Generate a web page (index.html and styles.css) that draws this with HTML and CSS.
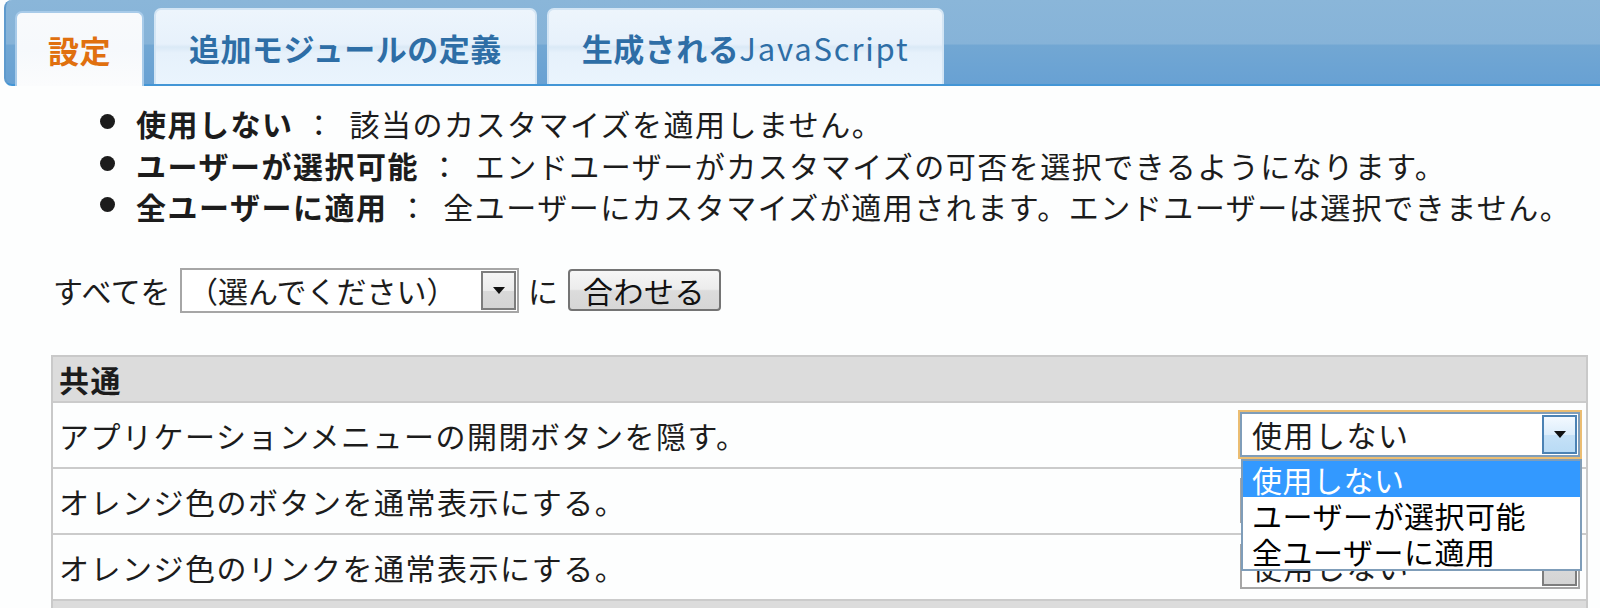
FILE: index.html
```html
<!DOCTYPE html>
<html lang="ja">
<head>
<meta charset="utf-8">
<title>設定</title>
<link rel="stylesheet" href="styles.css">
</head>
<body>
<div class="tabbar">
  <div class="tab active">設定</div>
  <div class="tab">追加モジュールの定義</div>
  <div class="tab">生成される<span class="latin">JavaScript</span></div>
</div>
<div class="content">
  <ul class="legend">
    <li><b>使用しない</b> <span class="sep">：</span> 該当のカスタマイズを適用しません。</li>
    <li><b>ユーザーが選択可能</b> <span class="sep">：</span> エンドユーザーがカスタマイズの可否を選択できるようになります。</li>
    <li><b>全ユーザーに適用</b> <span class="sep">：</span> 全ユーザーにカスタマイズが適用されます。エンドユーザーは選択できません。</li>
  </ul>
  <div class="bulk">
    <span class="bulk-label">すべてを</span>
    <div class="combo bulk-combo">
      <span class="combo-text">（選んでください）</span>
      <span class="combo-btn"><svg width="12" height="7" viewBox="0 0 12 7"><path d="M0 0H12L6 7Z" fill="#111"/></svg></span>
    </div>
    <span class="bulk-ni">に</span>
    <button class="btn" type="button">合わせる</button>
  </div>
  <table class="settings">
    <tr><th colspan="2">共通</th></tr>
    <tr>
      <td class="label">アプリケーションメニューの開閉ボタンを隠す。</td>
      <td class="choice">
        <div class="combo focus">
          <span class="combo-text">使用しない</span>
          <span class="combo-btn"><svg width="12" height="7" viewBox="0 0 12 7"><path d="M0 0H12L6 7Z" fill="#111"/></svg></span>
          <ul class="dropdown">
            <li class="selected">使用しない</li>
            <li>ユーザーが選択可能</li>
            <li>全ユーザーに適用</li>
          </ul>
        </div>
      </td>
    </tr>
    <tr>
      <td class="label">オレンジ色のボタンを通常表示にする。</td>
      <td class="choice">
        <div class="combo">
          <span class="combo-text">使用しない</span>
          <span class="combo-btn"><svg width="12" height="7" viewBox="0 0 12 7"><path d="M0 0H12L6 7Z" fill="#111"/></svg></span>
        </div>
      </td>
    </tr>
    <tr>
      <td class="label">オレンジ色のリンクを通常表示にする。</td>
      <td class="choice">
        <div class="combo">
          <span class="combo-text">使用しない</span>
          <span class="combo-btn"><svg width="12" height="7" viewBox="0 0 12 7"><path d="M0 0H12L6 7Z" fill="#111"/></svg></span>
        </div>
      </td>
    </tr>
    <tr><th colspan="2">ユーザー</th></tr>
  </table>
</div>
</body>
</html>
```

FILE: styles.css
```css
html, body {
  margin: 0;
  padding: 0;
  background: #fdfefe;
}

body {
  font-family: "Noto Sans CJK JP", "Noto Sans", sans-serif;
  font-size: 30px;
  letter-spacing: 1.5px;
  color: #1c1c1c;
  overflow: hidden;
}

/* ---------- tab bar ---------- */
.tabbar {
  margin-left: 4px;
  height: 84px;
  box-sizing: content-box;
  display: flex;
  align-items: flex-end;
  gap: 10px;
  padding-left: 9px;
  border-left: 2px solid #5e9acd;
  border-bottom: 2px solid #4396d6;
  border-radius: 8px 0 0 8px;
  background: linear-gradient(to bottom, #8ab6d9 0%, #86b3d8 52%, #72a7d3 54%, #68a1d3 100%);
}

.tab {
  box-sizing: border-box;
  height: 76px;
  padding: 0 33px;
  display: flex;
  align-items: center;
  font-size: 31px;
  font-weight: 700;
  letter-spacing: 0.5px;
  color: #2e6ea6;
  white-space: nowrap;
  border: 2px solid #d3e5f4;
  border-bottom: none;
  border-radius: 7px 7px 0 0;
  background: linear-gradient(to bottom, #edf5fc 0%, #e7f1fb 46%, #dae9f6 50%, #e6f1fb 58%, #eaf4fd 100%);
}

.tab.active {
  height: 75px;
  margin-bottom: -2px;
  padding: 0 31px;
  color: #e0700f;
  border-color: #a8cbe9;
  background: linear-gradient(to bottom, #f8fafc 0%, #f6f9fc 50%, #fbfcfd 100%);
}

.latin {
  font-weight: 400;
  letter-spacing: 1.8px;
}

/* ---------- content ---------- */
.content {
  padding: 0 12px 0 51px;
}

.legend {
  margin: 15px 0 0;
  padding-left: 85px;
  list-style: disc;
}

.legend li {
  line-height: 37.5px;
  white-space: nowrap;
}

.legend li::marker {
  font-size: 38px;
}

.legend b {
  font-weight: 700;
}

.legend .sep {
  margin: 0 6px 0 2px;
}

.bulk {
  display: flex;
  align-items: center;
  margin-top: 42px;
  height: 45px;
}

.bulk-label {
  margin-left: 2px;
  letter-spacing: 0.5px;
}

.bulk-ni {
  margin: 0 8px 0 9px;
}

/* ---------- combo boxes ---------- */
.combo {
  position: relative;
  box-sizing: border-box;
  width: 340px;
  height: 45px;
  display: flex;
  align-items: center;
  border: 2px solid #a6a6a6;
  background: #fff;
}

.bulk-combo {
  width: 339px;
  margin-left: 9px;
}

.combo-text {
  flex: 1;
  padding-left: 10px;
  line-height: 41px;
  white-space: nowrap;
}

.bulk-combo .combo-text {
  padding-left: 6px;
  letter-spacing: 0;
}

.combo-btn {
  box-sizing: border-box;
  width: 35px;
  height: 39px;
  margin-right: 1px;
  display: flex;
  align-items: center;
  justify-content: center;
  border: 2px solid #7d7d7d;
  background: linear-gradient(to bottom, #f5f5f5 0%, #ebebeb 50%, #d9d9d9 52%, #d4d4d4 100%);
}

.combo.focus {
  border-color: #7f9db9;
  outline: 2px solid #ebbd72;
}

.combo.focus .combo-btn {
  border-color: #4b82b4;
  background: linear-gradient(to bottom, #f3f9ff 0%, #dcedfb 50%, #c5e1f7 52%, #b9dbf5 100%);
}

.dropdown {
  position: absolute;
  top: 43px;
  left: -1px;
  width: 341px;
  box-sizing: border-box;
  margin: 2px 0 0;
  padding: 0;
  list-style: none;
  background: #fff;
  border: 2px solid #7f9db9;
  z-index: 5;
}

.dropdown li {
  height: 36px;
  line-height: 36px;
  padding-left: 9px;
  white-space: nowrap;
  letter-spacing: 0.5px;
  color: #000;
}

.dropdown li.selected {
  background: #3399ff;
  color: #fff;
}

/* ---------- button ---------- */
.btn {
  box-sizing: border-box;
  width: 153px;
  height: 42px;
  padding: 0;
  font-family: inherit;
  font-size: 30px;
  letter-spacing: 0.5px;
  line-height: 36px;
  color: #111;
  border: 2px solid #747474;
  border-radius: 4px;
  background: linear-gradient(to bottom, #f6f6f6 0%, #ececec 48%, #dcdcdc 52%, #d6d6d6 100%);
}

/* ---------- settings table ---------- */
.settings {
  width: 100%;
  margin-top: 42px;
  border-collapse: separate;
  border-spacing: 0;
  border: 2px solid #c9c9c9;
  border-bottom: none;
}

.settings th,
.settings td {
  box-sizing: border-box;
  border-bottom: 2px solid #cbcbcb;
  padding: 0 6px;
  vertical-align: middle;
}

.settings th {
  height: 45px;
  text-align: left;
  font-weight: 700;
  background: #dcdcdc;
}

.settings td {
  height: 66px;
  background: #fdfefe;
}

.settings td.label {
  white-space: nowrap;
}

.settings td.choice {
  width: 352px;
  padding: 0 6px 0 0;
}

.settings td.choice .combo {
  margin-left: auto;
}
```
